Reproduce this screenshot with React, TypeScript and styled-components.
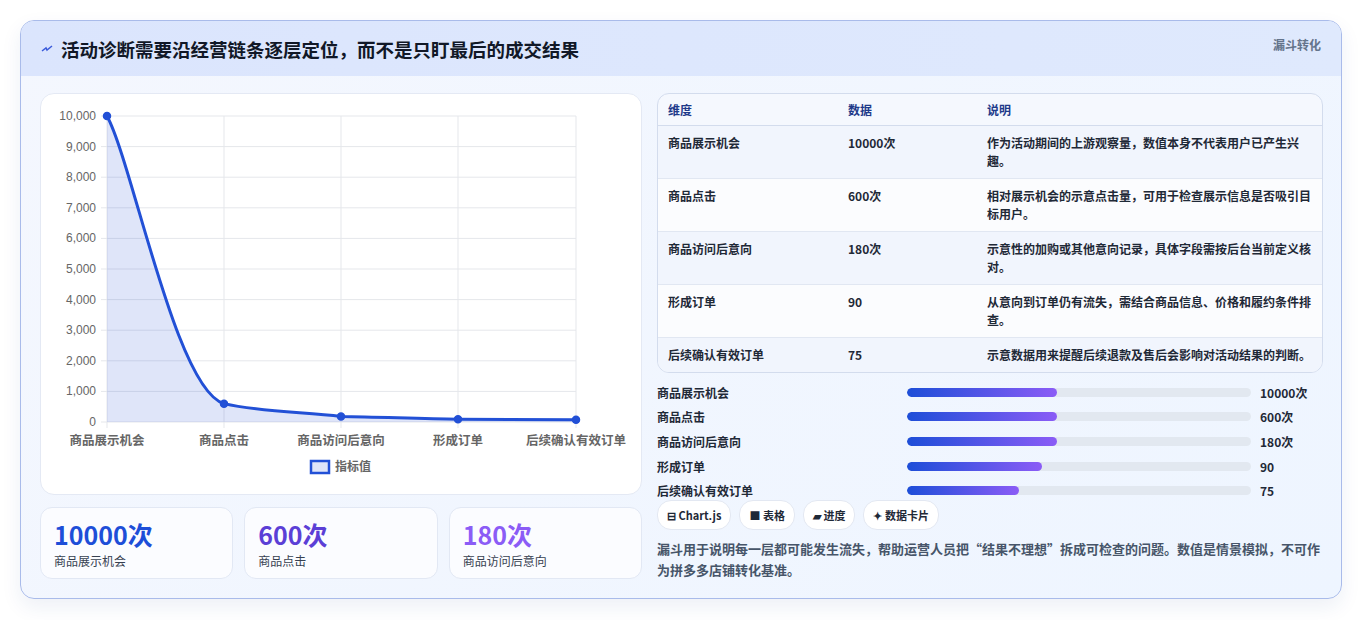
import React from "react";
import styled, { createGlobalStyle } from "styled-components";

const Global = createGlobalStyle`
  html, body { margin: 0; padding: 0; background: #fff; }
  body { font-family: "Noto Sans CJK SC", "Noto Sans", sans-serif; color: #1f2937; }
`;

const Page = styled.div`
  padding: 20px 21px 21px 20px;
`;
const Card = styled.div`
  border: 1px solid #a9bbea;
  border-radius: 14px;
  background: linear-gradient(135deg, #f4f7fe 0%, #eef5ff 100%);
  box-shadow: 0 8px 20px rgba(30, 60, 140, 0.08);
  overflow: hidden;
`;
const Header = styled.div`
  height: 55px;
  background: linear-gradient(90deg, #dbe5fd, #dfe9fd);
  display: flex;
  align-items: center;
  justify-content: space-between;
  padding: 0 20px;
  position: relative;
`;
const Title = styled.h1`
  margin: 0;
  font-size: 18.5px;
  font-weight: 700;
  color: #111827;
  display: flex;
  align-items: center;
  gap: 8px;
`;
const Tag = styled.div`
  position: absolute;
  right: 20px;
  top: 15px;
  font-size: 12px;
  font-weight: 700;
  color: #64748b;
`;
const Body = styled.div`
  display: grid;
  grid-template-columns: 602px 666px;
  gap: 15px;
  padding: 17px 19px 18px 19px;
`;
const Left = styled.div`
  display: flex;
  flex-direction: column;
  gap: 12px;
`;
const ChartCard = styled.div`
  height: 402px;
  background: #fff;
  border: 1px solid #e4e9f4;
  border-radius: 14px;
  box-sizing: border-box;
  overflow: hidden;
`;
const Stats = styled.div`
  display: grid;
  grid-template-columns: repeat(3, 1fr);
  gap: 11px;
`;
const Stat = styled.div`
  height: 72px;
  box-sizing: border-box;
  background: #fbfcff;
  border: 1px solid #e2e8f4;
  border-radius: 12px;
  padding: 8px 13px;
`;
const StatNum = styled.div<{ c: string }>`
  font-size: 25px;
  font-weight: 700;
  color: ${(p) => p.c};
  line-height: 36px;
`;
const StatLabel = styled.div`
  font-size: 12px;
  color: #374151;
`;
const Right = styled.div`
  display: flex;
  flex-direction: column;
`;
const Table = styled.table`
  width: 100%;
  table-layout: fixed;
  border-collapse: separate;
  border-spacing: 0;
  border: 1px solid #d3dced;
  border-radius: 12px;
  overflow: hidden;
  font-size: 12px;
  font-weight: 700;
  background: #f5f8fe;
`;
const Th = styled.th<{ w?: number }>`
  text-align: left;
  color: #1e3a8a;
  font-weight: 700;
  height: 31px;
  padding: 0 10px;
  width: ${(p) => (p.w ? p.w + "px" : "auto")};
  border-bottom: 1px solid #d3dced;
`;
const Tr = styled.tr<{ alt: boolean }>`
  background: ${(p) => (p.alt ? "#fbfcfe" : "#f1f5fd")};
`;
const Td = styled.td<{ last: boolean }>`
  padding: 8px 10px;
  vertical-align: top;
  line-height: 18px;
  color: #1f2937;
  border-bottom: ${(p) => (p.last ? "none" : "1px solid #e1e7f2")};
`;
const Bars = styled.div`
  display: flex;
  flex-direction: column;
  gap: 6.7px;
  margin-top: 10px;
`;
const BarRow = styled.div`
  display: grid;
  grid-template-columns: 250px 353px 1fr;
  align-items: center;
  font-size: 12px;
  font-weight: 700;
  height: 18px;
`;
const Track = styled.div`
  height: 9px;
  border-radius: 5px;
  background: #e2e8f0;
  margin-right: 9px;
  overflow: hidden;
`;
const Fill = styled.div`
  height: 100%;
  border-radius: 5px;
  background: linear-gradient(90deg, #1d4ed8, #8b5cf6);
`;
const Chips = styled.div`
  display: flex;
  gap: 8px;
  margin-top: auto;
`;
const Chip = styled.div`
  height: 28px;
  padding: 0 9px;
  display: flex;
  align-items: center;
  gap: 4px;
  border: 1px solid #e3e8f2;
  background: #fff;
  border-radius: 14px;
  font-size: 11px;
  font-weight: 700;
  color: #1f2937;
`;
const Note = styled.p`
  margin: 8px 0 0;
  font-size: 13px;
  font-weight: 700;
  line-height: 21px;
  color: #475569;
`;

const labels = ["商品展示机会", "商品点击", "商品访问后意向", "形成订单", "后续确认有效订单"];
const values = [10000, 600, 180, 90, 75];
const xs = [66, 183, 300, 417, 535];
const yOf = (v: number) => 328 - (v / 10000) * 306;

function Chart() {
  const pts = values.map((v, i) => [xs[i], yOf(v)]);
  const line = `M66,22 C92,70 135,296 183,${pts[1][1]} C220,318 262,318 300,${pts[2][1]} C340,323 380,325 417,${pts[3][1]} C460,325.5 500,325.7 535,${pts[4][1]}`;
  return (
    <svg width="600" height="400" style={{ display: "block" }}>
      {Array.from({ length: 11 }).map((_, i) => {
        const y = 328 - i * 30.6;
        return (
          <g key={i}>
            <line x1={60} x2={535} y1={y} y2={y} stroke="#e5e7eb" />
            <text x={55} y={y + 4} textAnchor="end" fontSize="12" fill="#666" fontFamily="Liberation Sans, sans-serif">
              {i === 0 ? "0" : (i * 1000).toLocaleString("en-US")}
            </text>
          </g>
        );
      })}
      {xs.map((x, i) => (
        <g key={i}>
          <line x1={x} x2={x} y1={22} y2={334} stroke="#e5e7eb" />
          <text x={x} y={351} textAnchor="middle" fontSize="12.5" fontWeight="700" fill="#666">
            {labels[i]}
          </text>
        </g>
      ))}
      <path d={`${line} L535,328 L66,328 Z`} fill="rgba(37,78,216,0.15)" />
      <path d={line} fill="none" stroke="#2250d6" strokeWidth="3" />
      {pts.map(([x, y], i) => (
        <circle key={i} cx={x} cy={y} r="3.5" fill="#2250d6" stroke="#2250d6" strokeWidth="1.5" />
      ))}
      <rect x={270} y={367} width={18} height={12} fill="rgba(37,78,216,0.15)" stroke="#2250d6" strokeWidth="2.5" />
      <text x={294} y={377} fontSize="12" fontWeight="700" fill="#666">指标值</text>
    </svg>
  );
}

const rows = [
  ["商品展示机会", "10000次", "作为活动期间的上游观察量，数值本身不代表用户已产生兴趣。"],
  ["商品点击", "600次", "相对展示机会的示意点击量，可用于检查展示信息是否吸引目标用户。"],
  ["商品访问后意向", "180次", "示意性的加购或其他意向记录，具体字段需按后台当前定义核对。"],
  ["形成订单", "90", "从意向到订单仍有流失，需结合商品信息、价格和履约条件排查。"],
  ["后续确认有效订单", "75", "示意数据用来提醒后续退款及售后会影响对活动结果的判断。"],
];
const fills = [150, 150, 150, 135, 112];

export default function App() {
  return (
    <Page>
      <Global />
      <Card>
        <Header>
          <Title>
            <svg width="12" height="12" viewBox="0 0 12 12">
              <path d="M1 8 L5 5 L6 7 L11 3" fill="none" stroke="#3b5bdb" strokeWidth="1.5" />
            </svg>
            活动诊断需要沿经营链条逐层定位，而不是只盯最后的成交结果
          </Title>
          <Tag>漏斗转化</Tag>
        </Header>
        <Body>
          <Left>
            <ChartCard>
              <Chart />
            </ChartCard>
            <Stats>
              <Stat>
                <StatNum c="#1d4ed8">10000次</StatNum>
                <StatLabel>商品展示机会</StatLabel>
              </Stat>
              <Stat>
                <StatNum c="#5b3fd6">600次</StatNum>
                <StatLabel>商品点击</StatLabel>
              </Stat>
              <Stat>
                <StatNum c="#8b5cf6">180次</StatNum>
                <StatLabel>商品访问后意向</StatLabel>
              </Stat>
            </Stats>
          </Left>
          <Right>
            <Table>
              <thead>
                <tr>
                  <Th w={160}>维度</Th>
                  <Th w={119}>数据</Th>
                  <Th>说明</Th>
                </tr>
              </thead>
              <tbody>
                {rows.map((r, i) => (
                  <Tr key={i} alt={i % 2 === 1}>
                    {r.map((c, j) => (
                      <Td key={j} last={i === rows.length - 1}>{c}</Td>
                    ))}
                  </Tr>
                ))}
              </tbody>
            </Table>
            <Bars>
              {rows.map((r, i) => (
                <BarRow key={i}>
                  <span>{r[0]}</span>
                  <Track>
                    <Fill style={{ width: fills[i] }} />
                  </Track>
                  <span>{r[1]}</span>
                </BarRow>
              ))}
            </Bars>
            <Chips>
              <Chip>⊟ Chart.js</Chip>
              <Chip>■ 表格</Chip>
              <Chip>▰ 进度</Chip>
              <Chip>✦ 数据卡片</Chip>
            </Chips>
            <Note>
              漏斗用于说明每一层都可能发生流失，帮助运营人员把“结果不理想”拆成可检查的问题。数值是情景模拟，不可作为拼多多店铺转化基准。
            </Note>
          </Right>
        </Body>
      </Card>
    </Page>
  );
}
